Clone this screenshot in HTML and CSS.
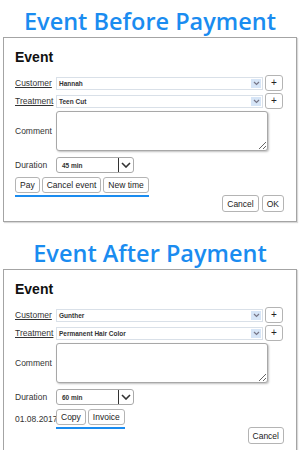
FILE: index.html
```html
<!DOCTYPE html>
<html lang="en">
<head>
	<meta charset="UTF-8">
	<title>Event</title>
	<link rel="stylesheet" href="styles.css">
</head>
<body>
	<h2 class="title">Event Before Payment</h2>
	<div class="dialog">
		<h3 class="dialog-title">Event</h3>
		<div class="row">
			<span class="label link">Customer</span>
			<div class="combo"><span class="combo-text">Hannah</span><span class="combo-arrow"><svg width="7" height="5" viewBox="0 0 7 5"><polyline points="1,1 3.5,3.5 6,1" fill="none" stroke="#778" stroke-width="1.2"/></svg></span></div>
			<button class="btn btn-add">+</button>
		</div>
		<div class="row">
			<span class="label link">Treatment</span>
			<div class="combo"><span class="combo-text">Teen Cut</span><span class="combo-arrow"><svg width="7" height="5" viewBox="0 0 7 5"><polyline points="1,1 3.5,3.5 6,1" fill="none" stroke="#778" stroke-width="1.2"/></svg></span></div>
			<button class="btn btn-add">+</button>
		</div>
		<div class="row row-comment">
			<span class="label">Comment</span>
			<textarea class="comment"></textarea>
		</div>
		<div class="row row-duration">
			<span class="label">Duration</span>
			<div class="dropdown"><span class="dropdown-text">45 min</span><span class="dropdown-arrow"><svg width="10" height="6" viewBox="0 0 10 6"><polyline points="1,1 5,5 9,1" fill="none" stroke="#333" stroke-width="1.6"/></svg></span></div>
		</div>
		<div class="row row-actions">
			<div class="actions">
				<button class="btn">Pay</button>
				<button class="btn">Cancel event</button>
				<button class="btn">New time</button>
			</div>
		</div>
		<div class="footer">
			<button class="btn">Cancel</button>
			<button class="btn">OK</button>
		</div>
	</div>

	<h2 class="title title-second">Event After Payment</h2>
	<div class="dialog">
		<h3 class="dialog-title">Event</h3>
		<div class="row">
			<span class="label link">Customer</span>
			<div class="combo"><span class="combo-text">Gunther</span><span class="combo-arrow"><svg width="7" height="5" viewBox="0 0 7 5"><polyline points="1,1 3.5,3.5 6,1" fill="none" stroke="#778" stroke-width="1.2"/></svg></span></div>
			<button class="btn btn-add">+</button>
		</div>
		<div class="row">
			<span class="label link">Treatment</span>
			<div class="combo"><span class="combo-text">Permanent Hair Color</span><span class="combo-arrow"><svg width="7" height="5" viewBox="0 0 7 5"><polyline points="1,1 3.5,3.5 6,1" fill="none" stroke="#778" stroke-width="1.2"/></svg></span></div>
			<button class="btn btn-add">+</button>
		</div>
		<div class="row row-comment">
			<span class="label">Comment</span>
			<textarea class="comment"></textarea>
		</div>
		<div class="row row-duration">
			<span class="label">Duration</span>
			<div class="dropdown"><span class="dropdown-text">60 min</span><span class="dropdown-arrow"><svg width="10" height="6" viewBox="0 0 10 6"><polyline points="1,1 5,5 9,1" fill="none" stroke="#333" stroke-width="1.6"/></svg></span></div>
		</div>
		<div class="row row-actions">
			<span class="label">01.08.2017</span>
			<div class="actions">
				<button class="btn">Copy</button>
				<button class="btn">Invoice</button>
			</div>
		</div>
		<div class="footer">
			<button class="btn">Cancel</button>
		</div>
	</div>
</body>
</html>
```

FILE: styles.css
```css
body{margin:0;background:#fff;font-family:"Liberation Sans",Arial,sans-serif;color:#333;}
.title{margin:0;padding:6px 0 1px;font-family:"Open Sans","Liberation Sans",sans-serif;font-size:23.5px;font-weight:600;line-height:30px;text-align:center;color:#1a8cf0;}
.title-second{margin-top:10px;}

.dialog{margin:0 3px;padding:11px 12px 9px 11px;border:1px solid #a4a4a4;box-shadow:1px 1px 1px rgba(0,0,0,.15);}
.dialog-title{margin:0 0 10px;font-size:14px;font-weight:bold;line-height:16px;color:#111;}

.row{display:flex;align-items:center;height:16px;margin-bottom:2px;}
.label{flex:none;width:41px;font-size:8.5px;white-space:nowrap;color:#333;}
.label.link{text-decoration:underline;}

.combo{display:flex;align-items:center;box-sizing:border-box;width:207px;height:13px;margin-right:2px;border:1px solid #d9e0e8;background:#fff;}
.combo-text{flex:1;padding-left:2px;font-size:6.5px;font-weight:bold;color:#333;}
.combo-arrow{display:flex;align-items:center;justify-content:center;width:10px;height:9px;margin-right:1px;background:#d6e5f7;}

.btn{box-sizing:border-box;height:16px;margin:0;padding:0 4px;border:1px solid #b4b4b4;border-radius:3px;background:#fff;font-family:"Liberation Sans",Arial,sans-serif;font-size:8.5px;line-height:14px;color:#222;}
.btn-add{width:18px;padding:0;font-size:10px;}

.row-comment{height:40px;margin-bottom:6px;}
.comment{box-sizing:border-box;width:212px;height:40px;margin:0;padding:2px;border:1px solid #a8a8a8;border-radius:3px;box-shadow:1px 1px 2px rgba(0,0,0,.25);resize:both;}

.row-duration{margin-bottom:4px;}
.dropdown{display:flex;align-items:center;box-sizing:border-box;width:78px;height:16px;border:1px solid #aaa;border-radius:3px;background:#fff;}
.dropdown-text{flex:1;padding-left:5px;font-size:6.5px;font-weight:bold;color:#333;}
.dropdown-arrow{display:flex;align-items:center;justify-content:center;width:14px;height:14px;border-left:1px solid #333;}

.row-actions{height:auto;margin-bottom:0;}
.actions{display:flex;gap:2px;padding-bottom:2px;border-bottom:2px solid #1a8cf0;}

.footer{display:flex;justify-content:flex-end;gap:3px;margin-top:-2px;}
.footer .btn{height:17px;}
```
